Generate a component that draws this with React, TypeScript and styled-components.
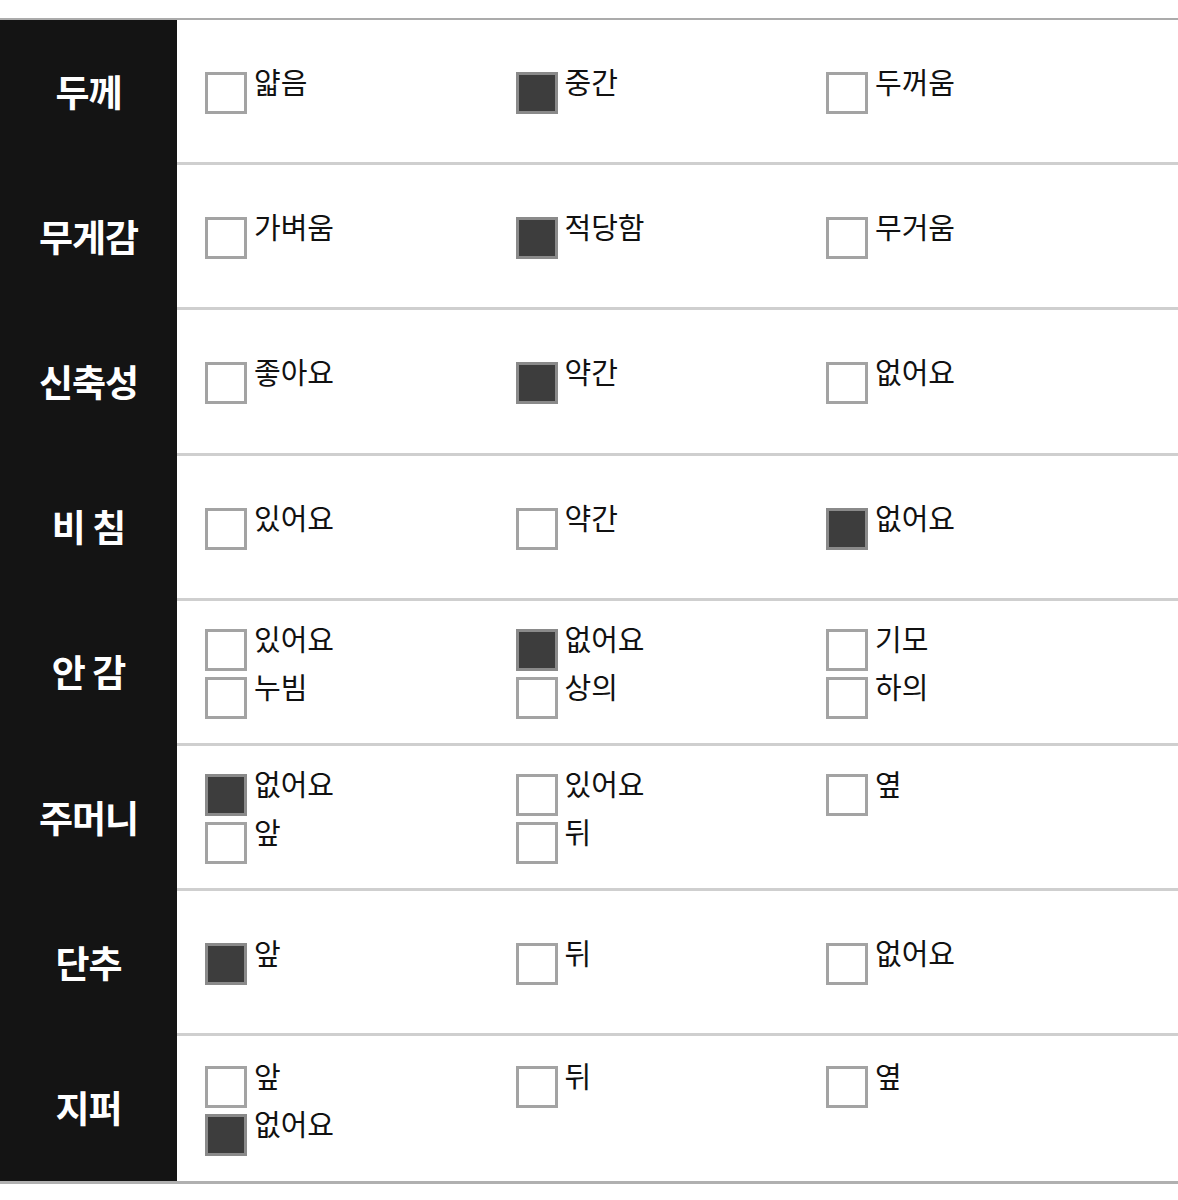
import React from "react";
import styled, { createGlobalStyle } from "styled-components";

interface Option {
  label: string;
  checked?: boolean;
}

interface SpecRow {
  title: string;
  // each column holds one or more stacked options
  columns: Option[][];
}

const rows: SpecRow[] = [
  {
    title: "두께",
    columns: [[{ label: "얇음" }], [{ label: "중간", checked: true }], [{ label: "두꺼움" }]],
  },
  {
    title: "무게감",
    columns: [[{ label: "가벼움" }], [{ label: "적당함", checked: true }], [{ label: "무거움" }]],
  },
  {
    title: "신축성",
    columns: [[{ label: "좋아요" }], [{ label: "약간", checked: true }], [{ label: "없어요" }]],
  },
  {
    title: "비 침",
    columns: [[{ label: "있어요" }], [{ label: "약간" }], [{ label: "없어요", checked: true }]],
  },
  {
    title: "안 감",
    columns: [
      [{ label: "있어요" }, { label: "누빔" }],
      [{ label: "없어요", checked: true }, { label: "상의" }],
      [{ label: "기모" }, { label: "하의" }],
    ],
  },
  {
    title: "주머니",
    columns: [
      [{ label: "없어요", checked: true }, { label: "앞" }],
      [{ label: "있어요" }, { label: "뒤" }],
      [{ label: "옆" }],
    ],
  },
  {
    title: "단추",
    columns: [[{ label: "앞", checked: true }], [{ label: "뒤" }], [{ label: "없어요" }]],
  },
  {
    title: "지퍼",
    columns: [
      [{ label: "앞" }, { label: "없어요", checked: true }],
      [{ label: "뒤" }],
      [{ label: "옆" }],
    ],
  },
];

const App: React.FC = () => {
  return (
    <>
      <GlobalStyle />
      <Page>
        <Table>
          {rows.map((row, i) => (
            <Row key={row.title}>
              <Title>{row.title}</Title>
              <Options $last={i === rows.length - 1}>
                {row.columns.map((col, ci) => (
                  <Column key={ci}>
                    {col.map((opt) => (
                      <Item key={opt.label}>
                        <Box $checked={!!opt.checked} />
                        <Label>{opt.label}</Label>
                      </Item>
                    ))}
                  </Column>
                ))}
              </Options>
            </Row>
          ))}
        </Table>
      </Page>
    </>
  );
};

const GlobalStyle = createGlobalStyle`
  body {
    margin: 0;
    background: #ffffff;
    font-family: "Noto Sans CJK KR", "Noto Sans", sans-serif;
  }
`;

const Page = styled.div`
  padding-top: 18px;
  width: 1178px;
`;

const Table = styled.div`
  border-top: 2px solid #ababab;
  border-bottom: 3px solid #b0b0b0;
`;

const Row = styled.div`
  display: grid;
  grid-template-columns: 177px 1fr;
`;

const Title = styled.div`
  background: #141414;
  color: #ffffff;
  font-size: 37px;
  font-weight: 700;
  display: flex;
  align-items: center;
  justify-content: center;
  letter-spacing: -1px;
  padding-bottom: 4px;
`;

const Options = styled.div<{ $last: boolean }>`
  display: grid;
  grid-template-columns: repeat(3, 310.5px);
  align-content: center;
  padding-left: 28px;
  height: ${(p) => (p.$last ? "145px" : "142.2px")};
  border-bottom: ${(p) => (p.$last ? "none" : "3px solid #cfcfcf")};
`;

const Column = styled.div`
  display: flex;
  flex-direction: column;
  align-self: start;
`;

const Item = styled.div`
  display: flex;
  align-items: flex-start;
  height: 48px;
`;

const Box = styled.span<{ $checked: boolean }>`
  box-sizing: border-box;
  width: 42px;
  height: 42px;
  margin-top: 5px;
  border: 3px solid ${(p) => (p.$checked ? "#8a8a8a" : "#a3a3a3")};
  background: ${(p) => (p.$checked ? "#3d3d3d" : "#ffffff")};
  flex-shrink: 0;
`;

const Label = styled.span`
  margin-left: 7px;
  margin-top: -2px;
  font-size: 29px;
  line-height: 32px;
  color: #111111;
`;

export default App;
